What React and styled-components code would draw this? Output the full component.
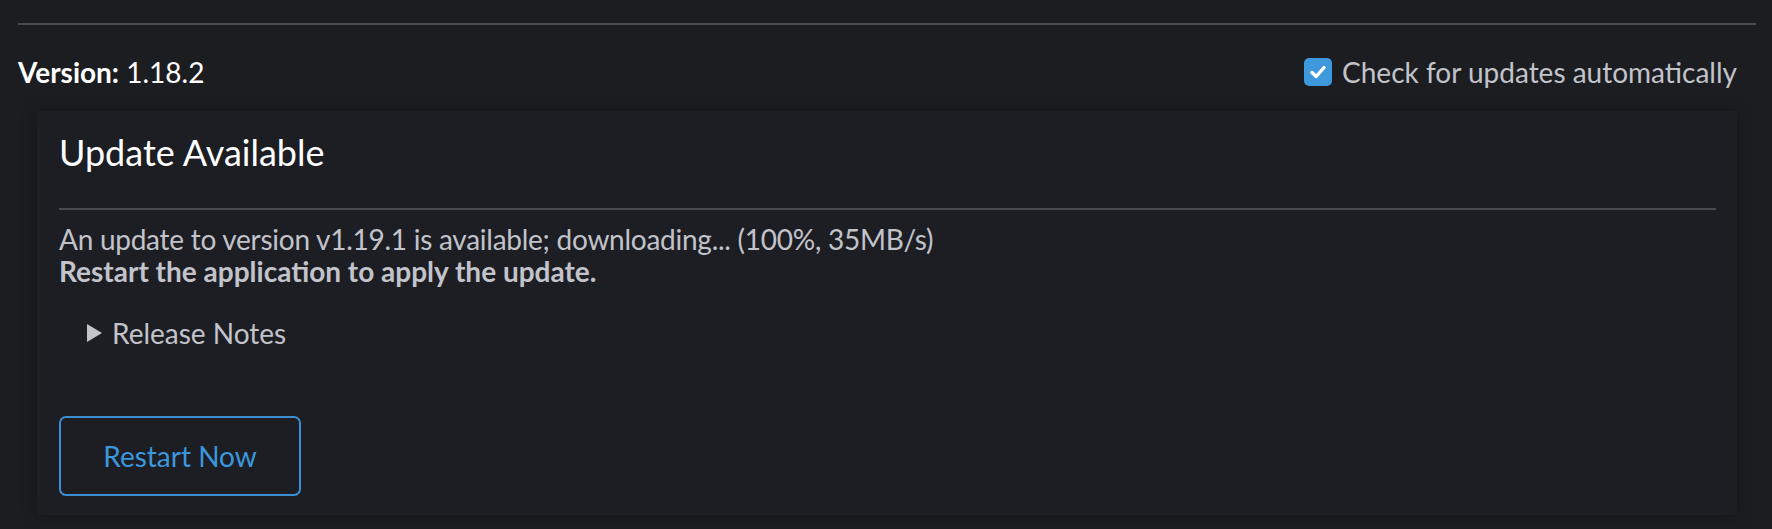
import React from 'react';
import styled, { createGlobalStyle } from 'styled-components';

const GlobalStyle = createGlobalStyle`
body {
  margin: 0;
  background: #1c1d21;
  font-family: Lato, "Open Sans", sans-serif;
}
`

const Page = styled.div`
padding: 23px 16px 14px 18px;
`

const Rule = styled.div`
height: 2px;
background: #4a4b51;
`

const TopRow = styled.div`
display: flex;
justify-content: space-between;
align-items: center;
margin-top: 30px;
padding-right: 19px;
`

const VersionText = styled.div`
font-size: 28px;
color: #ffffff;
strong {
  font-weight: 700;
}
`

const CheckLabel = styled.label`
display: flex;
align-items: center;
gap: 10px;
font-size: 28px;
color: #c2c3cb;
`

const CheckBox = styled.span`
display: flex;
align-items: center;
justify-content: center;
width: 28px;
height: 28px;
border-radius: 5px;
background: #3d98dc;
`

const Panel = styled.div`
margin: 22px 19px 0 19px;
padding: 19px 21px 19px 22px;
background: #1d1e23;
box-shadow: 0 0 14px rgba(0, 0, 0, 0.35);
`

const Title = styled.h2`
margin: 0;
font-size: 36px;
font-weight: 400;
color: #ffffff;
`

const Divider = styled.div`
height: 2px;
margin-top: 34px;
background: #4a4b51;
`

const Body = styled.p`
margin: 13px 0 0 0;
font-size: 28px;
line-height: 32px;
color: #c2c3cb;
strong {
  font-weight: 700;
}
`

const Lead = styled.span`
letter-spacing: -0.26px;
`

const Notes = styled.div`
display: flex;
align-items: center;
gap: 10px;
margin-top: 30px;
padding-left: 28px;
font-size: 28px;
line-height: 32px;
color: #c2c3cb;
`

const Marker = styled.span`
width: 0;
height: 0;
border-top: 9px solid transparent;
border-bottom: 9px solid transparent;
border-left: 15px solid #c2c3cb;
`

const RestartButton = styled.button`
display: block;
margin-top: 67px;
width: 242px;
height: 80px;
border: 2px solid #3a8fd0;
border-radius: 7px;
background: transparent;
color: #3b97dd;
font-family: Lato, "Open Sans", sans-serif;
font-size: 28px;
`

const Check = () => (
  <svg width="20" height="20" viewBox="0 0 20 20">
    <path d="M4 10.5 L8.2 14.5 L16 5.5" fill="none" stroke="#ffffff" strokeWidth="3.4" strokeLinecap="round" strokeLinejoin="round" />
  </svg>
)

const App = () => {
  return (
    <Page>
      <GlobalStyle />
      <Rule />
      <TopRow>
        <VersionText><strong>Version:</strong> 1.18.2</VersionText>
        <CheckLabel>
          <CheckBox><Check /></CheckBox>
          <span>Check for updates automatically</span>
        </CheckLabel>
      </TopRow>
      <Panel>
        <Title>Update Available</Title>
        <Divider />
        <Body>
          <Lead>An update to version v1.19.1 is available; downloading... (100%, 35MB/s)</Lead><br />
          <strong>Restart the application to apply the update.</strong>
        </Body>
        <Notes>
          <Marker />
          <span>Release Notes</span>
        </Notes>
        <RestartButton>Restart Now</RestartButton>
      </Panel>
    </Page>
  )
}

export default App;
